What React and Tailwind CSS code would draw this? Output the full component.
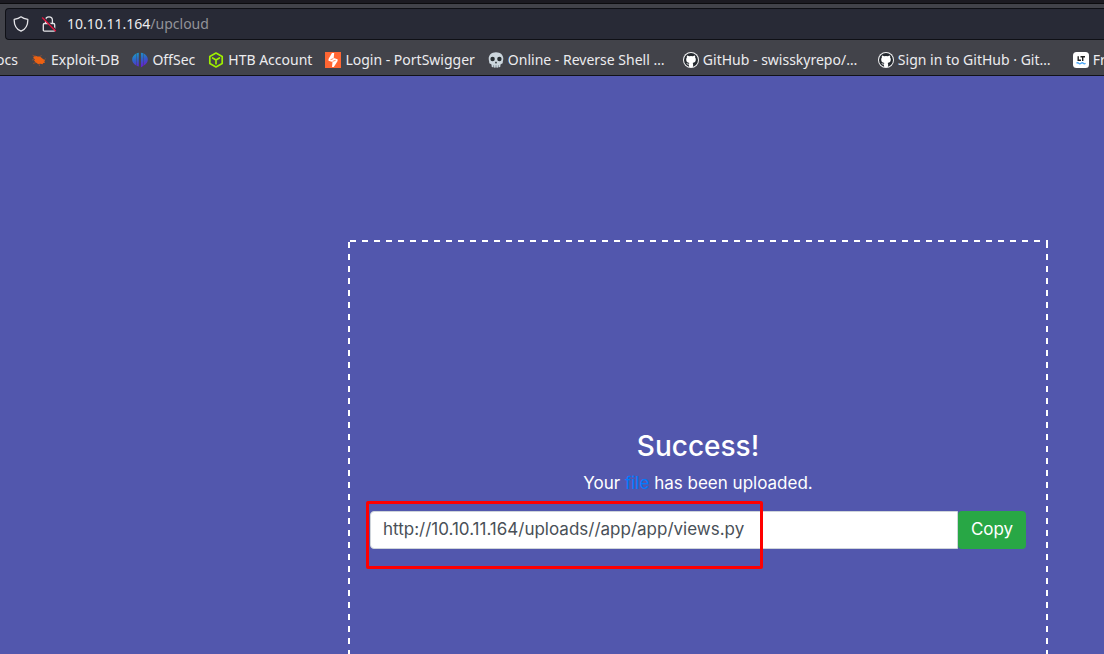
import React from "react";

function Shield() {
  return (
    <svg viewBox="0 0 16 16" className="size-4 shrink-0" fill="none" stroke="#e6e6ea" strokeWidth="1.300" strokeLinejoin="round" aria-hidden="true">
      <path d="M8 .8 C6 2.400 3.800 3 1.200 3.400 C1 8.600 3 13 8 15.200 C13 13 15 8.600 14.800 3.400 C12.200 3 10 2.400 8 .8Z" />
    </svg>
  );
}

function InsecureLock() {
  return (
    <svg viewBox="0 0 16 16" className="size-4 shrink-0" fill="none" aria-hidden="true">
      <path d="M4.600 7.500 V4.200 A3.400 3.400 0 0 1 11.400 4.200 V7.500 M3.500 7.500 H12.500 Q13.700 7.500 13.700 8.700 V14 Q13.700 15.200 12.500 15.200 H3.500 Q2.300 15.200 2.300 14 V8.700 Q2.300 7.500 3.500 7.500Z" stroke="#e6e6ea" strokeWidth="1.300" />
      <path d="M2.300 1.300 L15.300 14.500" stroke="#282a36" strokeWidth="1.500" />
      <path d="M1.200 1.500 L14.800 15.200" stroke="#e2143e" strokeWidth="1.400" />
    </svg>
  );
}

function ExploitIcon() {
  return (
    <svg viewBox="0 0 16 16" className="size-4 shrink-0" aria-hidden="true">
      <path d="M2.500 4.800 L4.500 3.700 L6.500 4.600 L9 4.600 L12 7 L14.200 8.500 L13.300 9.200 L14 10.800 L12.300 11 L11.500 12.300 L9.500 11.800 L7 12 L4.500 10.300 L3 8.500 L4 7.200 L2.300 6.200Z" fill="#ec6112" />
      <path d="M5 4.500 L1.500 3.200 M9 4.800 L10.500 3 M5 10.500 L2 11.500 M8 12 L8.500 14 M13 8.500 L14.500 6.500 M3.500 7.500 L1 8" stroke="#a9512a" strokeWidth=".7" />
    </svg>
  );
}

function OffSecIcon() {
  return (
    <svg viewBox="0 0 16 16" className="size-4 shrink-0" aria-hidden="true">
      <defs>
        <linearGradient id="offsec" x1="0" y1="0" x2=".3" y2="1">
          <stop offset="0" stopColor="#18a4c8" />
          <stop offset=".55" stopColor="#315fc8" />
          <stop offset="1" stopColor="#6422d0" />
        </linearGradient>
      </defs>
      <path d="M4.200 1.600 V13.600 C-1.200 10.500 -1.200 4.500 4.200 1.600Z M4.600 1.300 Q5.700 .7 6.800 .7 V14.600 Q6 14.500 4.600 13.800Z M8.900 .7 Q10.200 .8 11.400 1.300 V13.800 L8.900 15.600Z M11.800 1.600 C17.200 4.500 17.200 10.500 11.800 13.600Z" fill="url(#offsec)" />
    </svg>
  );
}

function CubeIcon() {
  return (
    <svg viewBox="0 0 16 16" className="size-4 shrink-0" fill="none" stroke="#9fef00" strokeWidth="1.700" strokeLinejoin="round" strokeLinecap="round" aria-hidden="true">
      <path d="M8 1 L14.200 4.400 V11.600 L8 15 L1.800 11.600 V4.400Z M4.600 6 L8 7.900 L11.400 6 M8 8 V11.700" />
    </svg>
  );
}

function SwiggerIcon() {
  return (
    <svg viewBox="0 0 16 16" className="size-4 shrink-0" aria-hidden="true">
      <path d="M0 0H16V16H0Z" fill="#ff6633" />
      <path d="M7 1 H9.200 L8.700 6 L12.600 7.300 V9 L8.800 15 H7 L7.500 10 L3.500 8.700 V7Z" fill="#fff" />
      <path d="M5.500 7.700 L8.400 6.600 M7.600 9.400 L10.600 8.300" stroke="#ff6633" strokeWidth=".8" />
    </svg>
  );
}

function SkullIcon() {
  return (
    <svg viewBox="0 0 16 16" className="size-4 shrink-0" aria-hidden="true">
      <path d="M8 .2 C3.500 .2 .7 3 .7 6.600 C.7 8.700 1.400 9.500 1.200 10.500 C1.300 12.200 3.400 11.600 3.600 12.700 V14.500 Q4.300 15.800 5.400 15 Q6.600 16.200 8 15.300 Q9.400 16.200 10.600 15 Q11.700 15.800 12.400 14.500 V12.700 C12.600 11.600 14.700 12.200 14.800 10.500 C14.600 9.500 15.300 8.700 15.300 6.600 C15.300 3 12.500 .2 8 .2Z" fill="#ccd6dd" />
      <circle cx="4.600" cy="7" r="2.200" fill="#292f33" />
      <circle cx="11.400" cy="7" r="2.200" fill="#292f33" />
      <path d="M8 9.200 L9.100 11 Q8 11.900 6.900 11Z" fill="#292f33" />
      <path d="M5.600 13.200 V15 M8 13.200 V15.300 M10.400 13.200 V15" stroke="#66757f" strokeWidth=".7" />
    </svg>
  );
}

function GitHubIcon() {
  return (
    <svg viewBox="0 0 16 16" className="size-4 shrink-0" aria-hidden="true">
      <circle cx="8" cy="8" r="8" fill="#f4f4f5" />
      <circle cx="8" cy="8" r="7" fill="#24292f" />
      <path d="M5.900 14.700 V12.500 C4.200 12.900 3.800 11.900 3.400 11.300 C4.500 11.200 4.700 12.100 5.900 11.800 Q6 11.200 6.400 10.900 C4.300 10.600 3.200 9.700 3.200 7.500 Q3.200 6.300 3.900 5.600 Q3.600 4.500 4 3.400 Q5 3.400 6.100 4.200 Q8 3.700 9.900 4.200 Q11 3.400 12 3.400 Q12.400 4.500 12.100 5.600 Q12.800 6.300 12.800 7.500 C12.800 9.700 11.700 10.600 9.600 10.900 Q10.100 11.400 10.100 12.300 V14.700 Q8 15.300 5.900 14.700Z" fill="#fff" />
    </svg>
  );
}

function LanguageToolIcon() {
  return (
    <svg viewBox="0 0 16 16" className="size-4 shrink-0" fill="none" aria-hidden="true">
      <rect width="16" height="16" rx="3.500" fill="#fff" />
      <path d="M5.200 4.200 V8.300 H8 M7.500 4.800 H12 M9.700 4.500 V9" stroke="#222" strokeWidth="1.400" />
      <path d="M3.500 11.300 Q4.600 10.200 5.700 11.300 T8 11.300 T10.300 11.300 T12.500 11.300" stroke="#48a5f5" strokeWidth="1.300" />
    </svg>
  );
}

const bookmarks = [
  { label: "Exploit-DB", Icon: ExploitIcon },
  { label: "OffSec", Icon: OffSecIcon },
  { label: "HTB Account", Icon: CubeIcon },
  { label: "Login - PortSwigger", Icon: SwiggerIcon },
  { label: "Online - Reverse Shell …", Icon: SkullIcon, wide: true },
  { label: "GitHub - swisskyrepo/…", Icon: GitHubIcon, wide: true },
  { label: "Sign in to GitHub · Git…", Icon: GitHubIcon, wide: true },
  { label: "Free", Icon: LanguageToolIcon },
];

function BrowserBar() {
  return (
    <header className="shrink-0 overflow-hidden border-b border-[#111217] bg-[#42434a] font-['Noto_Sans',sans-serif] text-[14px] leading-5 text-[#ececef]">
      <div className="h-1 border-b border-[#0c0c0f] bg-[#1c1b22]" />
      <div className="pt-1 pl-[5px]">
        <div className="flex h-8 items-center gap-3 rounded-l border border-r-0 border-[#0f1016] bg-[#282a36] pl-[7px]">
          <Shield />
          <InsecureLock />
          <div className="relative -ml-0.5 min-w-0 flex-1">
            <div aria-hidden="true" className="pointer-events-none whitespace-nowrap">
              10.10.11.164<span className="text-[#939399]">/upcloud</span>
            </div>
            <input
              type="text"
              aria-label="Address"
              defaultValue="10.10.11.164/upcloud"
              className="absolute inset-0 w-full bg-transparent text-transparent outline-none"
            />
          </div>
        </div>
      </div>
      <nav aria-label="Bookmarks" className="flex h-[35px] items-center gap-[13px] pt-1 whitespace-nowrap">
        <a href="#docs" className="flex w-[18px] shrink-0 justify-end">Docs</a>
        {bookmarks.map(({ label, Icon, wide }) => (
          <a key={label} href="#bookmark" className={wide ? "flex w-[182px] shrink-0 items-center gap-1" : "flex shrink-0 items-center gap-1"}>
            <Icon />
            {label}
          </a>
        ))}
      </nav>
    </header>
  );
}

export default function App() {
  return (
    <div className="flex h-screen flex-col overflow-hidden bg-[#5257ad]">
      <BrowserBar />
      <main className="flex min-h-0 flex-1 pt-[164px] pr-14 pl-[348px] font-[Inter,sans-serif] text-[17px] text-white">
        <section className="h-[700px] min-w-0 flex-1 px-[22px] pt-[186px] text-center [background:linear-gradient(90deg,#fff_50%,transparent_50%)_2px_0/12px_2px_repeat-x,linear-gradient(#fff_50%,transparent_50%)_0_2px/2px_12px_repeat-y,linear-gradient(#fff_50%,transparent_50%)_100%_2px/2px_12px_repeat-y]">
          <h1 className="text-[28px] leading-10 font-medium">Success!</h1>
          <p className="mt-0.5 leading-[30px]">
            Your <a href="#file" className="text-[#007bff]">file</a> has been uploaded.
          </p>
          <div className="relative mt-[13px] flex h-[38px]">
            <input
              type="text"
              aria-label="Uploaded file address"
              readOnly
              value="http://10.10.11.164/uploads//app/app/views.py"
              className="min-w-0 flex-1 rounded-l border border-[#ced4da] bg-white px-3 text-[#495057] outline-none"
            />
            <button type="button" className="w-[68px] rounded bg-[#28a745]">Copy</button>
            <div className="pointer-events-none absolute -top-2.5 -left-1 h-[68px] w-[397px] rounded-xs border-3 border-[#ff0000]" />
          </div>
        </section>
      </main>
    </div>
  );
}
